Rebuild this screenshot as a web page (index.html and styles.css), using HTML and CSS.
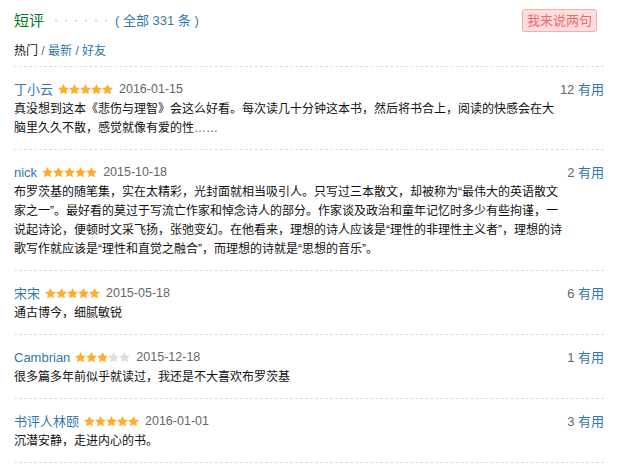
FILE: index.html
```html
<!DOCTYPE html>
<html lang="zh-CN">
<head>
<meta charset="utf-8">
<title>短评</title>
<link rel="stylesheet" href="styles.css">
</head>
<body>
<svg class="defs" width="0" height="0" aria-hidden="true">
  <defs>
    <polygon id="star" points="5,0.3 6.47,3.28 9.76,3.76 7.38,6.07 7.94,9.35 5,7.8 2.06,9.35 2.62,6.07 0.24,3.76 3.53,3.28"/>
  </defs>
</svg>
<div class="comments">
  <div class="head">
    <h2 class="title">短评</h2>
    <span class="dots">······</span>
    <a class="all">( 全部 331 条 )</a>
    <a class="say">我来说两句</a>
  </div>
  <div class="tabs">
    <span class="tab on">热门</span><span class="sep"> / </span><a class="tab">最新</a><span class="sep"> / </span><a class="tab">好友</a>
  </div>

  <div class="review">
    <div class="meta">
      <div class="who">
        <a class="name">丁小云</a>
        <span class="stars"><svg viewBox="0.2 0.3 9.6 9.6"><use href="#star"/></svg><svg viewBox="0.2 0.3 9.6 9.6"><use href="#star"/></svg><svg viewBox="0.2 0.3 9.6 9.6"><use href="#star"/></svg><svg viewBox="0.2 0.3 9.6 9.6"><use href="#star"/></svg><svg viewBox="0.2 0.3 9.6 9.6"><use href="#star"/></svg></span>
        <span class="date">2016-01-15</span>
      </div>
      <div class="vote"><span class="num">12</span> <a>有用</a></div>
    </div>
    <p class="text">真没想到这本《悲伤与理智》会这么好看。每次读几十分钟这本书，然后将书合上，阅读的快感会在大脑里久久不散，感觉就像有爱的性<a class="more">……</a></p>
  </div>

  <div class="review">
    <div class="meta">
      <div class="who">
        <a class="name">nick</a>
        <span class="stars"><svg viewBox="0.2 0.3 9.6 9.6"><use href="#star"/></svg><svg viewBox="0.2 0.3 9.6 9.6"><use href="#star"/></svg><svg viewBox="0.2 0.3 9.6 9.6"><use href="#star"/></svg><svg viewBox="0.2 0.3 9.6 9.6"><use href="#star"/></svg><svg viewBox="0.2 0.3 9.6 9.6"><use href="#star"/></svg></span>
        <span class="date">2015-10-18</span>
      </div>
      <div class="vote"><span class="num">2</span> <a>有用</a></div>
    </div>
    <p class="text">布罗茨基的随笔集，实在太精彩，光封面就相当吸引人。只写过三本散文，却被称为“最伟大的英语散文家之一”。最好看的莫过于写流亡作家和悼念诗人的部分。作家谈及政治和童年记忆时多少有些拘谨，一说起诗论，便顿时文采飞扬，张弛变幻。在他看来，理想的诗人应该是“理性的非理性主义者”，理想的诗歌写作就应该是“理性和直觉之融合”，而理想的诗就是“思想的音乐”。</p>
  </div>

  <div class="review">
    <div class="meta">
      <div class="who">
        <a class="name">宋宋</a>
        <span class="stars"><svg viewBox="0.2 0.3 9.6 9.6"><use href="#star"/></svg><svg viewBox="0.2 0.3 9.6 9.6"><use href="#star"/></svg><svg viewBox="0.2 0.3 9.6 9.6"><use href="#star"/></svg><svg viewBox="0.2 0.3 9.6 9.6"><use href="#star"/></svg><svg viewBox="0.2 0.3 9.6 9.6"><use href="#star"/></svg></span>
        <span class="date">2015-05-18</span>
      </div>
      <div class="vote"><span class="num">6</span> <a>有用</a></div>
    </div>
    <p class="text">通古博今，细腻敏锐</p>
  </div>

  <div class="review">
    <div class="meta">
      <div class="who">
        <a class="name">Cambrian</a>
        <span class="stars"><svg viewBox="0.2 0.3 9.6 9.6"><use href="#star"/></svg><svg viewBox="0.2 0.3 9.6 9.6"><use href="#star"/></svg><svg viewBox="0.2 0.3 9.6 9.6"><use href="#star"/></svg><svg class="off" viewBox="0.2 0.3 9.6 9.6"><use href="#star"/></svg><svg class="off" viewBox="0.2 0.3 9.6 9.6"><use href="#star"/></svg></span>
        <span class="date">2015-12-18</span>
      </div>
      <div class="vote"><span class="num">1</span> <a>有用</a></div>
    </div>
    <p class="text">很多篇多年前似乎就读过，我还是不大喜欢布罗茨基</p>
  </div>

  <div class="review">
    <div class="meta">
      <div class="who">
        <a class="name">书评人林颐</a>
        <span class="stars"><svg viewBox="0.2 0.3 9.6 9.6"><use href="#star"/></svg><svg viewBox="0.2 0.3 9.6 9.6"><use href="#star"/></svg><svg viewBox="0.2 0.3 9.6 9.6"><use href="#star"/></svg><svg viewBox="0.2 0.3 9.6 9.6"><use href="#star"/></svg><svg viewBox="0.2 0.3 9.6 9.6"><use href="#star"/></svg></span>
        <span class="date">2016-01-01</span>
      </div>
      <div class="vote"><span class="num">3</span> <a>有用</a></div>
    </div>
    <p class="text">沉潜安静，走进内心的书。</p>
  </div>
</div>
</body>
</html>
```

FILE: styles.css
```css
html, body {
  margin: 0;
  padding: 0;
  background: #fff;
}

body {
  font-family: "Liberation Sans", "Noto Sans CJK SC", sans-serif;
  color: #111;
  font-size: 12px;
}

.defs {
  position: absolute;
  width: 0;
  height: 0;
}

.comments {
  width: 590px;
  margin-left: 14px;
  padding-top: 9px;
}

a {
  color: #3377aa;
  text-decoration: none;
}

.head {
  display: flex;
  align-items: center;
  height: 23px;
}

.title {
  margin: 0;
  font-size: 15px;
  font-weight: normal;
  color: #007722;
  line-height: 23px;
}

.dots {
  margin-left: 10px;
  font-size: 12px;
  letter-spacing: 6px;
  color: #aaa;
  line-height: 23px;
}

.all {
  margin-left: 1px;
  font-size: 13px;
  line-height: 23px;
}

.say {
  margin-left: auto;
  margin-right: 7px;
  height: 21px;
  line-height: 21px;
  padding: 0 4px;
  font-size: 13px;
  color: #ee6a6a;
  background: #ffdede;
  border: 1px solid #f7abab;
  border-radius: 3px;
}

.tabs {
  margin-top: 9px;
  line-height: 20px;
  padding-bottom: 5px;
  border-bottom: 1px dashed #ddd;
  font-size: 12px;
}

.tab.on {
  color: #111;
}

.sep {
  color: #3377aa;
}

.review {
  padding: 12px 0 11px;
  border-bottom: 1px dashed #ddd;
}

.meta {
  display: flex;
  justify-content: space-between;
  align-items: center;
  height: 21px;
  line-height: 21px;
  font-size: 13px;
}

.who {
  display: flex;
  align-items: center;
}

.name {
  font-size: 13px;
}

.stars {
  display: flex;
  margin-left: 5px;
}

.stars svg {
  width: 11px;
  height: 11px;
  fill: #ffac2d;
}

.stars svg.off {
  fill: #dddddd;
}

.date {
  margin-left: 6px;
  font-size: 12.5px;
  color: #666;
}

.vote {
  font-size: 13px;
}

.num {
  color: #666;
}

.text {
  margin: 0;
  width: 550px;
  line-height: 19px;
  font-size: 12px;
  color: #111;
}

.more {
  color: #3377aa;
}
```
